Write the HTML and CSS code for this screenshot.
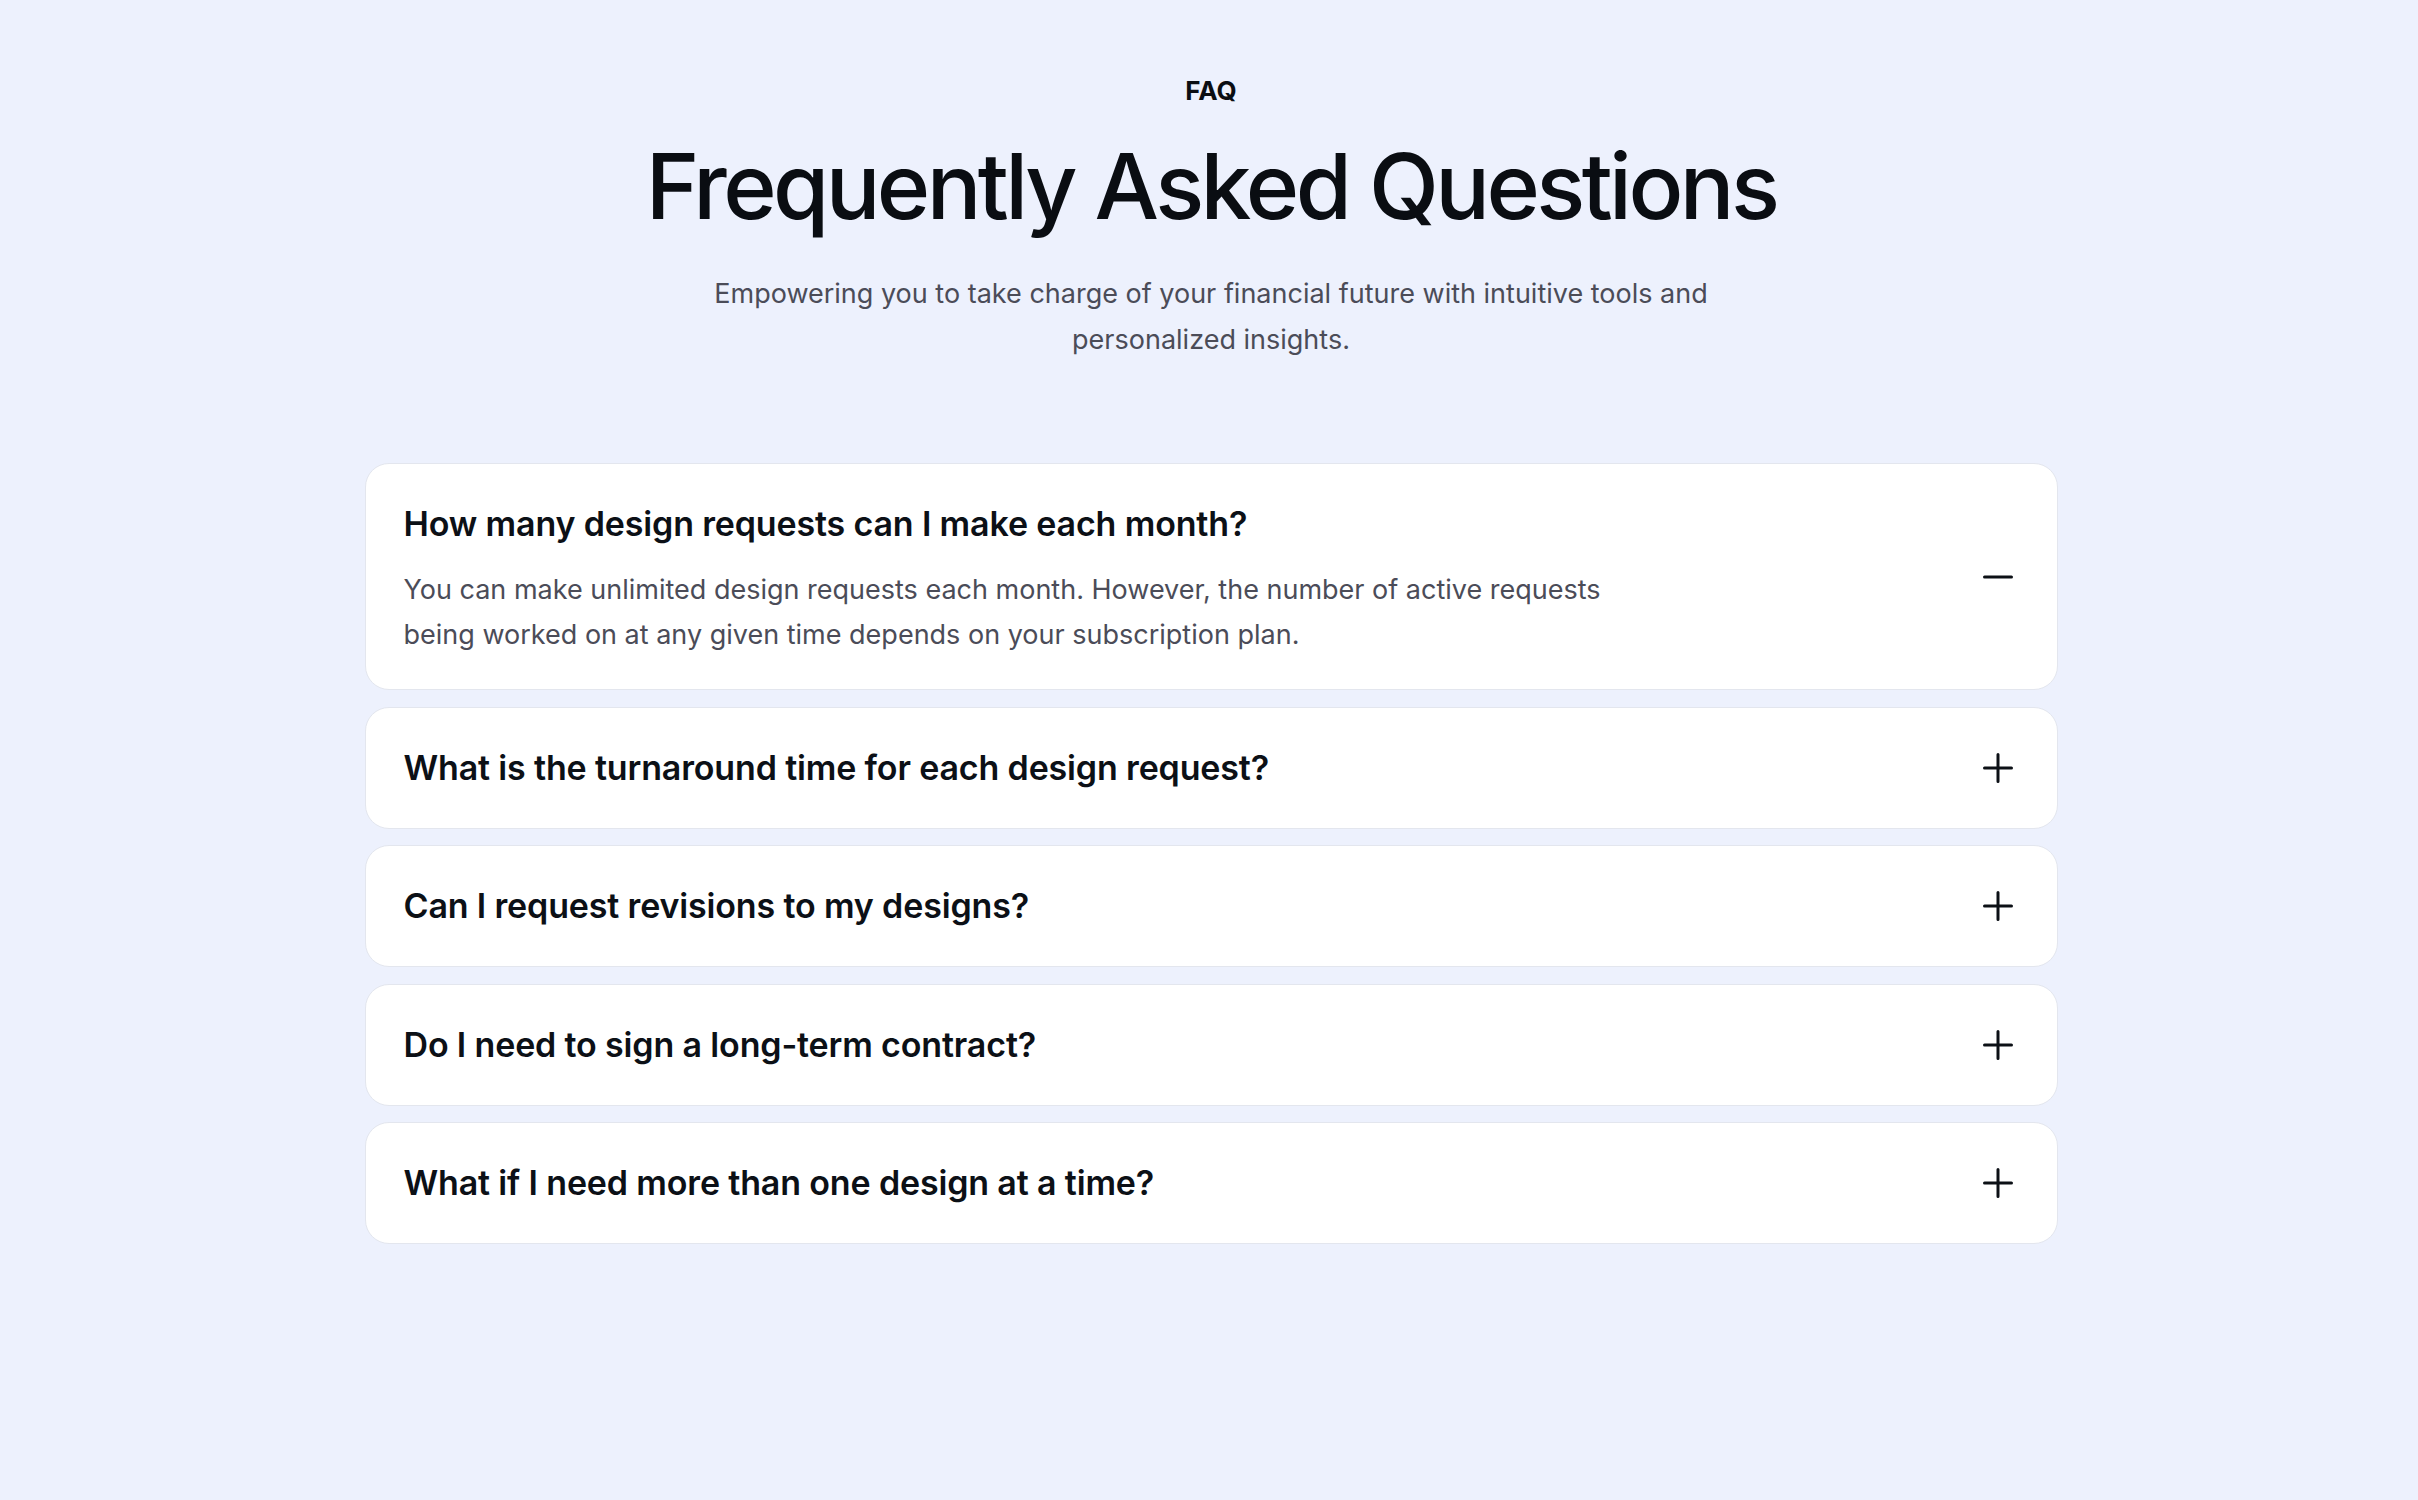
FILE: index.html
```html
<!DOCTYPE html>
<html lang="en">
<head>
<meta charset="utf-8">
<title>FAQ</title>
<link rel="stylesheet" href="styles.css">
</head>
<body>
<section class="faq">
  <header class="faq-head">
    <p class="eyebrow">FAQ</p>
    <h1 class="title">Frequently Asked Questions</h1>
    <p class="lead">Empowering you to take charge of your financial future with intuitive tools and personalized insights.</p>
  </header>
  <div class="list">
    <div class="item open">
      <div class="item-text">
        <h3 class="q">How many design requests can I make each month?</h3>
        <p class="a">You can make unlimited design requests each month. However, the number of active requests being worked on at any given time depends on your subscription plan.</p>
      </div>
      <svg class="icon" viewBox="0 0 40 40" aria-hidden="true"><path d="M6.5 20h27" /></svg>
    </div>
    <div class="item">
      <div class="item-text"><h3 class="q">What is the turnaround time for each design request?</h3></div>
      <svg class="icon" viewBox="0 0 40 40" aria-hidden="true"><path d="M6.5 20h27M20 6.5v27" /></svg>
    </div>
    <div class="item">
      <div class="item-text"><h3 class="q">Can I request revisions to my designs?</h3></div>
      <svg class="icon" viewBox="0 0 40 40" aria-hidden="true"><path d="M6.5 20h27M20 6.5v27" /></svg>
    </div>
    <div class="item">
      <div class="item-text"><h3 class="q">Do I need to sign a long-term contract?</h3></div>
      <svg class="icon" viewBox="0 0 40 40" aria-hidden="true"><path d="M6.5 20h27M20 6.5v27" /></svg>
    </div>
    <div class="item">
      <div class="item-text"><h3 class="q">What if I need more than one design at a time?</h3></div>
      <svg class="icon" viewBox="0 0 40 40" aria-hidden="true"><path d="M6.5 20h27M20 6.5v27" /></svg>
    </div>
  </div>
</section>
</body>
</html>
```
FILE: styles.css
```css
* { box-sizing: border-box; }
html, body { margin: 0; padding: 0; }
body {
  background: #edf1fd;
  font-family: Inter, "Noto Sans", sans-serif;
  color: #0b0e13;
  min-height: 1500px;
}
.faq {
  padding: 75px 0 0 4px;
}
.faq-head {
  display: flex;
  flex-direction: column;
  align-items: center;
  text-align: center;
}
.eyebrow {
  margin: 0;
  font-size: 26px;
  line-height: 32px;
  font-weight: 650;
  color: #0b0e13;
}
.title {
  margin: 29px 0 0;
  font-size: 91px;
  line-height: 101px;
  font-weight: 500;
  letter-spacing: -3.6px;
  color: #0a0d12;
}
.lead {
  margin: 34px 0 0;
  max-width: 1040px;
  font-size: 27px;
  line-height: 46px;
  color: #4b4c58;
}
.list {
  width: 1693px;
  margin: 100px auto 0;
  display: flex;
  flex-direction: column;
  gap: 16.5px;
}
.item {
  display: flex;
  align-items: center;
  justify-content: space-between;
  background: #ffffff;
  border: 1px solid #e3e6ee;
  border-radius: 24px;
  padding: 32px 39px 32px 38px;
}
.item-text { flex: 1; }
.q {
  margin: 0;
  font-size: 34px;
  line-height: 56px;
  font-weight: 600;
  letter-spacing: -0.15px;
  color: #0c1016;
}
.a {
  margin: 15px 0 0;
  max-width: 1230px;
  font-size: 27px;
  line-height: 45px;
  color: #4b4c58;
}
.icon {
  width: 40px;
  height: 40px;
  flex: none;
  fill: none;
  stroke: #0c1016;
  stroke-width: 3;
  stroke-linecap: round;
}
```
